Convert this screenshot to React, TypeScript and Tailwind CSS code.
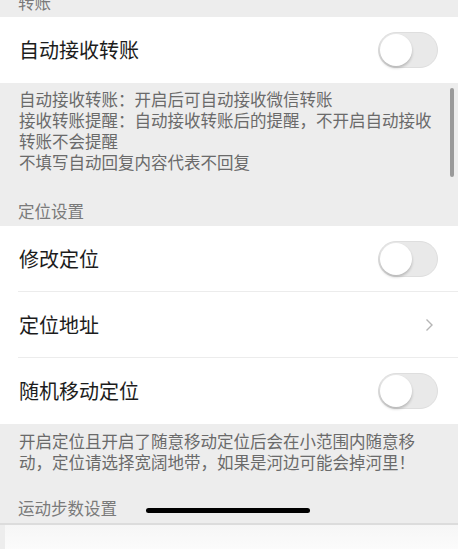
import React from "react";

function Toggle() {
  return (
    <div className="relative h-[36px] w-[60px] rounded-full border border-[#dedede] bg-[#e9e9e9]">
      <div className="absolute left-[1px] top-[1px] h-[32px] w-[32px] rounded-full bg-white shadow-[0_2px_3px_rgba(0,0,0,0.22)]" />
    </div>
  );
}

function Chevron() {
  return (
    <svg width="9" height="14" viewBox="0 0 9 14" className="mr-[4px]">
      <path d="M1.5 1.5 L7 7 L1.5 12.5" fill="none" stroke="#b5b5b5" strokeWidth="1.4" />
    </svg>
  );
}

function Row({ label, right, divider }: { label: string; right: React.ReactNode; divider?: boolean }) {
  return (
    <div className={`ml-[18px] flex h-[66px] items-center justify-between pr-[20px] ${divider ? "border-b border-[#ececec]" : ""}`}>
      <span className="pl-[1px] text-[20px] text-[#1c1c1c]">{label}</span>
      {right}
    </div>
  );
}

function Header({ title, top = "pt-[26px]" }: { title: string; top?: string }) {
  return <div className={`px-[18px] pb-[4px] ${top} text-[16.5px] leading-[22px] text-[#7a7a7a]`}>{title}</div>;
}

export default function App() {
  return (
    <div
      className="relative h-[549px] w-[458px] overflow-hidden bg-[#ededed]"
      style={{ fontFamily: '"Noto Sans CJK SC", "Noto Sans", sans-serif' }}
    >
      <div className="-mt-[35px]">
        <Header title="转账" />
        <div className="bg-white">
          <Row label="自动接收转账" right={<Toggle />} />
        </div>
        <div className="relative px-[19px] pb-[1px] pt-[6px] text-[16.5px] leading-[21px] text-[#6a6a6a]">
          <p>自动接收转账：开启后可自动接收微信转账</p>
          <p>接收转账提醒：自动接收转账后的提醒，不开启自动接收转账不会提醒</p>
          <p>不填写自动回复内容代表不回复</p>
          <div className="absolute right-[4px] top-[5px] h-[89px] w-[4px] rounded-full bg-[#9a9a9a]" />
        </div>
        <Header title="定位设置" />
        <div className="bg-white">
          <Row label="修改定位" right={<Toggle />} divider />
          <Row label="定位地址" right={<Chevron />} divider />
          <Row label="随机移动定位" right={<Toggle />} />
        </div>
        <div className="px-[19px] pt-[7px] text-[16.5px] leading-[21px] text-[#6a6a6a]">
          <p>开启定位且开启了随意移动定位后会在小范围内随意移动，定位请选择宽阔地带，如果是河边可能会掉河里！</p>
        </div>
        <Header title="运动步数设置" top="pt-[24px]" />
        <div className="h-[2px] bg-[#dcdcdc]" />
        <div className="flex h-[40px]">
          <div className="w-[5px] bg-[#ededed]" />
          <div className="flex-1 bg-gradient-to-b from-[#f6f6f6] to-white" />
        </div>
      </div>
      <div className="absolute left-[146px] top-[508px] h-[5px] w-[164px] rounded-full bg-black" />
    </div>
  );
}
